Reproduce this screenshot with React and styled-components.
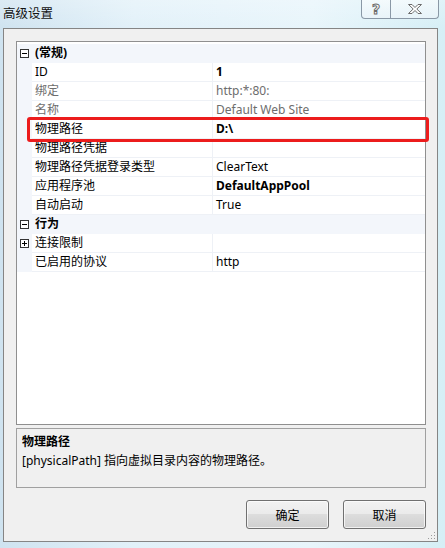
import React from 'react';
import styled, { createGlobalStyle } from 'styled-components';

const GlobalStyle = createGlobalStyle`
  html, body {
    margin: 0;
    padding: 0;
  }
  body {
    width: 445px;
    height: 548px;
    overflow: hidden;
    font-family: "Noto Sans", "Noto Sans CJK SC", sans-serif;
    font-size: 12px;
    color: #000;
  }
`;

const Window = styled.div`
  position: relative;
  width: 445px;
  height: 548px;
  display: flex;
  flex-direction: column;
  background: linear-gradient(90deg, #cfe3f0 0%, #e2f1f9 30%, #e8f5fb 70%, #d6eff6 100%);
`;

const TitleBar = styled.div`
  height: 28px;
  display: flex;
  justify-content: space-between;
  align-items: flex-start;
  padding-left: 3px;
  background: linear-gradient(180deg, rgba(255, 255, 255, 0.25), rgba(255, 255, 255, 0));
`;

const Title = styled.div`
  margin-top: 6px;
  font-size: 12.5px;
  line-height: 16px;
  color: #111;
`;

const CaptionGroup = styled.div`
  display: flex;
  height: 18px;
  margin-right: 6px;
  border: 1px solid #8a98a6;
  border-top: none;
  border-radius: 0 0 4px 4px;
  background: linear-gradient(180deg, rgba(255, 255, 255, 0.55), rgba(236, 244, 249, 0.7));
  overflow: hidden;
`;

const CaptionButton = styled.div`
  width: ${(p) => p.$w}px;
  display: flex;
  align-items: center;
  justify-content: center;
  & + & {
    border-left: 1px solid #8a98a6;
  }
`;

const HelpGlyph = styled.span`
  font-family: "DejaVu Sans", sans-serif;
  font-size: 14px;
  font-weight: bold;
  line-height: 14px;
  color: #fff;
  -webkit-text-stroke: 1px #6b6b6b;
`;

const Client = styled.div`
  flex: 1;
  margin: 0 7px 6px 3px;
  border: 1px solid #858585;
  background: #f0f0f0;
  padding: 12px 11px 12px 12px;
  display: flex;
  flex-direction: column;
  position: relative;
`;

const Grid = styled.div`
  height: 384px;
  box-sizing: border-box;
  border: 1px solid #8f8f8f;
  background: #fff;
  padding-top: 2px;
`;

const Row = styled.div`
  display: flex;
  height: 19px;
  background: ${(p) => (p.$category ? '#f3f6fb' : '#fff')};
`;

const Gutter = styled.div`
  width: 15px;
  flex: none;
  background: #f3f6fb;
  display: flex;
  align-items: center;
  justify-content: center;
`;

const CategoryLabel = styled.div`
  padding-left: 3px;
  font-weight: bold;
  line-height: 18px;
`;

const NameCell = styled.div`
  width: 180px;
  flex: none;
  box-sizing: border-box;
  padding-left: 3px;
  line-height: 18px;
  border-bottom: 1px solid #eef1f6;
  color: ${(p) => (p.$disabled ? '#6d6d6d' : '#000')};
  white-space: nowrap;
`;

const ValueCell = styled.div`
  flex: 1;
  box-sizing: border-box;
  padding-left: 3px;
  line-height: 18px;
  border-left: 1px solid #eef1f6;
  border-bottom: 1px solid #eef1f6;
  font-weight: ${(p) => (p.$bold ? 'bold' : 'normal')};
  color: ${(p) => (p.$disabled ? '#6d6d6d' : '#000')};
  white-space: nowrap;
`;

const Description = styled.div`
  margin-top: 3px;
  height: 60px;
  box-sizing: border-box;
  border: 1px solid #a0a0a0;
  padding: 3px 5px;
  line-height: 19px;
`;

const DescTitle = styled.div`
  font-weight: bold;
`;

const ButtonRow = styled.div`
  margin-top: 12px;
  display: flex;
  justify-content: flex-end;
  gap: 14px;
`;

const Button = styled.button`
  width: 83px;
  height: 29px;
  box-sizing: border-box;
  border: 1px solid #707070;
  border-radius: 3px;
  background: linear-gradient(180deg, #f2f2f2 0%, #ebebeb 48%, #dddddd 50%, #cfcfcf 100%);
  box-shadow: inset 0 0 0 1px rgba(255, 255, 255, 0.7);
  font-family: "Noto Sans CJK SC", sans-serif;
  font-size: 12px;
  color: #000;
  padding: 0;
`;

const Highlight = styled.div`
  position: absolute;
  left: 27px;
  top: 117px;
  width: 402px;
  height: 25px;
  box-sizing: border-box;
  border: 3px solid #ec1c1c;
  border-radius: 3px;
  pointer-events: none;
`;

const Grip = styled.svg`
  position: absolute;
  right: 1px;
  bottom: 1px;
`;

const ToggleBox = ({ open }) => (
  <svg width="9" height="9" viewBox="0 0 9 9">
    <rect x="0.5" y="0.5" width="8" height="8" fill="#fff" stroke="#333" />
    <path d="M2 4.5H7" stroke="#000" />
    {!open && <path d="M4.5 2V7" stroke="#000" />}
  </svg>
);

const groups = [
  {
    label: '(常规)',
    rows: [
      { name: 'ID', value: '1', bold: true },
      { name: '绑定', value: 'http:*:80:', disabled: true },
      { name: '名称', value: 'Default Web Site', disabled: true },
      { name: '物理路径', value: 'D:\\', bold: true },
      { name: '物理路径凭据', value: '' },
      { name: '物理路径凭据登录类型', value: 'ClearText' },
      { name: '应用程序池', value: 'DefaultAppPool', bold: true },
      { name: '自动启动', value: 'True' },
    ],
  },
  {
    label: '行为',
    rows: [
      { name: '连接限制', value: '', expandable: true },
      { name: '已启用的协议', value: 'http' },
    ],
  },
];

export default function App() {
  return (
    <>
      <GlobalStyle />
      <Window>
        <TitleBar>
          <Title>高级设置</Title>
          <CaptionGroup>
            <CaptionButton $w={28}>
              <HelpGlyph>?</HelpGlyph>
            </CaptionButton>
            <CaptionButton $w={47}>
              <svg width="16" height="12" viewBox="0 0 16 12">
                <path
                  d="M1.5 1.5H5L8 4.5L11 1.5H14.5L9.8 6L14.5 10.5H11L8 7.5L5 10.5H1.5L6.2 6Z"
                  fill="#fff"
                  stroke="#6b6b6b"
                  strokeWidth="1"
                  strokeLinejoin="round"
                />
              </svg>
            </CaptionButton>
          </CaptionGroup>
        </TitleBar>
        <Client>
          <Grid>
            {groups.map((g) => (
              <React.Fragment key={g.label}>
                <Row $category>
                  <Gutter>
                    <ToggleBox open />
                  </Gutter>
                  <CategoryLabel>{g.label}</CategoryLabel>
                </Row>
                {g.rows.map((r) => (
                  <Row key={r.name}>
                    <Gutter>{r.expandable && <ToggleBox open={false} />}</Gutter>
                    <NameCell $disabled={r.disabled}>{r.name}</NameCell>
                    <ValueCell $bold={r.bold} $disabled={r.disabled}>
                      {r.value}
                    </ValueCell>
                  </Row>
                ))}
              </React.Fragment>
            ))}
          </Grid>
          <Description>
            <DescTitle>物理路径</DescTitle>
            <div>[physicalPath] 指向虚拟目录内容的物理路径。</div>
          </Description>
          <ButtonRow>
            <Button>确定</Button>
            <Button>取消</Button>
          </ButtonRow>
          <Grip width="10" height="10" viewBox="0 0 10 10">
            {[
              [8, 2],
              [5, 5],
              [8, 5],
              [2, 8],
              [5, 8],
              [8, 8],
            ].map(([x, y]) => (
              <rect key={`${x}-${y}`} x={x} y={y} width="1" height="1" fill="#9a9a9a" />
            ))}
          </Grip>
        </Client>
        <Highlight />
      </Window>
    </>
  );
}
